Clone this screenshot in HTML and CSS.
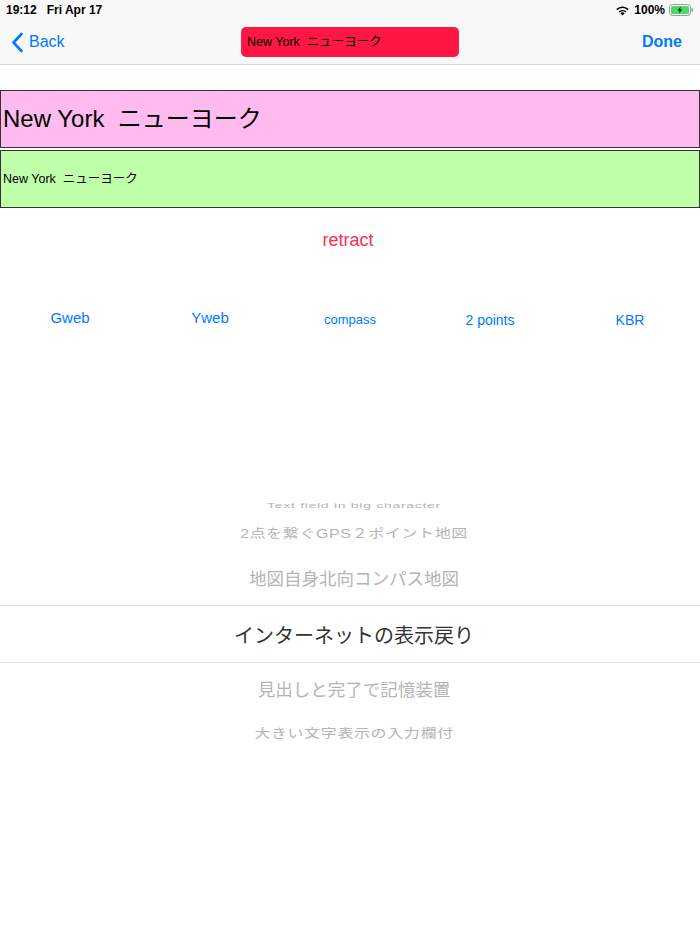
FILE: index.html
```html
<!DOCTYPE html>
<html lang="ja">
<head>
    <meta charset="UTF-8">
    <title>New York</title>
    <link rel="stylesheet" href="styles.css">
</head>
<body>
    <div class="top">
        <div class="status">
            <span class="time">19:12&nbsp;&nbsp;&nbsp;Fri Apr 17</span>
            <span class="right">
                <svg class="wifi" width="15" height="11" viewBox="0 0 15 11">
                    <path d="M7.5 10.5 L5.3 8.2 A3.2 3.2 0 0 1 9.7 8.2 Z" fill="#000"/>
                    <path d="M3.6 6.5 A5.6 5.6 0 0 1 11.4 6.5 L10.3 7.6 A4.1 4.1 0 0 0 4.7 7.6 Z" fill="#000"/>
                    <path d="M1.2 4.1 A9 9 0 0 1 13.8 4.1 L12.7 5.2 A7.5 7.5 0 0 0 2.3 5.2 Z" fill="#000"/>
                </svg>
                <span class="pct">100%</span>
                <svg class="battery" width="25" height="12" viewBox="0 0 25 12">
                    <rect x="0.5" y="0.5" width="21" height="11" rx="3" fill="none" stroke="#9a9a9a"/>
                    <rect x="2" y="2" width="18" height="8" rx="1.5" fill="#4cd964"/>
                    <rect x="22.5" y="4" width="1.5" height="4" rx="0.7" fill="#9a9a9a"/>
                    <path d="M11.8 2.6 L8.6 6.4 L10.8 6.4 L9.8 9.4 L13.2 5.5 L11 5.5 Z" fill="#000"/>
                </svg>
            </span>
        </div>
        <div class="nav">
            <a class="back">
                <svg width="13" height="21" viewBox="0 0 13 21">
                    <path d="M10.5 2 L2.5 10.5 L10.5 19" fill="none" stroke="#007aff" stroke-width="2.6" stroke-linecap="round" stroke-linejoin="round"/>
                </svg>
                <span>Back</span>
            </a>
            <div class="title">New York&nbsp;&nbsp;ニューヨーク</div>
            <a class="done">Done</a>
        </div>
    </div>

    <div class="big">New York&nbsp;&nbsp;ニューヨーク</div>
    <div class="small">New York&nbsp;&nbsp;ニューヨーク</div>

    <div class="retract">retract</div>

    <div class="links">
        <a class="l1">Gweb</a>
        <a class="l1">Yweb</a>
        <a class="l2">compass</a>
        <a class="l3">2 points</a>
        <a class="l3">KBR</a>
    </div>

    <div class="picker">
        <div class="row r4">Text field in big character</div>
        <div class="row r3">2点を繋ぐGPS２ポイント地図</div>
        <div class="row r2">地図自身北向コンパス地図</div>
        <div class="row sel">インターネットの表示戻り</div>
        <div class="row r2b">見出しと完了で記憶装置</div>
        <div class="row r3b">大きい文字表示の入力欄付</div>
    </div>
</body>
</html>
```

FILE: styles.css
```css
*{
    margin: 0;
    padding: 0;
}

body{
    width: 700px;
    height: 934px;
    background: #fff;
    font-family: "Liberation Sans", "Noto Sans CJK JP", sans-serif;
    overflow: hidden;
}

.top{
    background: #f8f8f8;
    border-bottom: 1px solid #d6d6d6;
    height: 64px;
}

.status{
    height: 20px;
    display: flex;
    justify-content: space-between;
    align-items: center;
    padding: 0 6px;
    font-size: 12px;
    color: #000;
}

.status .time{
    font-weight: bold;
}

.status .pct{
    font-weight: bold;
}

.status .right{
    display: flex;
    align-items: center;
    gap: 4px;
}

.nav{
    height: 44px;
    display: flex;
    align-items: center;
    justify-content: space-between;
    padding: 0 18px 0 11px;
}

.back{
    display: flex;
    align-items: center;
    gap: 5px;
    color: #007aff;
    font-size: 16px;
    width: 229px;
}

.title{
    width: 212px;
    height: 30px;
    line-height: 30px;
    background: #ff1744;
    border-radius: 5px;
    font-size: 12.5px;
    padding-left: 6px;
    color: #000;
}

.done{
    width: 222px;
    text-align: right;
    color: #007aff;
    font-size: 16px;
    font-weight: bold;
}

.big{
    margin-top: 25px;
    height: 56px;
    border: 1px solid #333;
    background: #ffbbf0;
    font-size: 24px;
    line-height: 56px;
    padding-left: 2px;
}

.small{
    margin-top: 2px;
    height: 56px;
    border: 1px solid #333;
    background: #c0ffaa;
    font-size: 12.5px;
    line-height: 56px;
    padding-left: 2px;
}

.retract{
    margin-top: 20px;
    text-align: center;
    color: #ff2d55;
    font-size: 18px;
    line-height: 24px;
    padding-right: 4px;
}

.links{
    margin-top: 58px;
    display: grid;
    grid-template-columns: repeat(5, 140px);
    height: 20px;
    color: #007aff;
    text-align: center;
}

.links .l1{
    font-size: 15px;
    line-height: 16px;
}

.links .l2{
    font-size: 13px;
    line-height: 20px;
}

.links .l3{
    font-size: 14px;
    line-height: 20px;
}

.picker{
    margin-top: 168px;
    text-align: center;
    color: #b4b4b4;
}

.row{
    display: flex;
    align-items: center;
    justify-content: center;
    padding-left: 8px;
}

.r4{
    height: 14px;
    font-size: 14px;
    transform: scaleY(0.55);
    letter-spacing: 0.7px;
}

.r3{
    height: 28px;
    margin-top: 7px;
    font-size: 16px;
    transform: scaleY(0.78);
    letter-spacing: 0.6px;
}

.r2{
    height: 32px;
    margin-top: 14px;
    margin-bottom: 12px;
    font-size: 17.5px;
}

.sel{
    height: 56px;
    border-top: 1px solid #e2e2e2;
    border-bottom: 1px solid #e2e2e2;
    color: #333;
    font-size: 20px;
}

.r2b{
    height: 30px;
    margin-top: 10px;
    font-size: 17.5px;
}

.r3b{
    height: 28px;
    margin-top: 16px;
    font-size: 16px;
    transform: scaleY(0.78);
    letter-spacing: 0.6px;
}
```
